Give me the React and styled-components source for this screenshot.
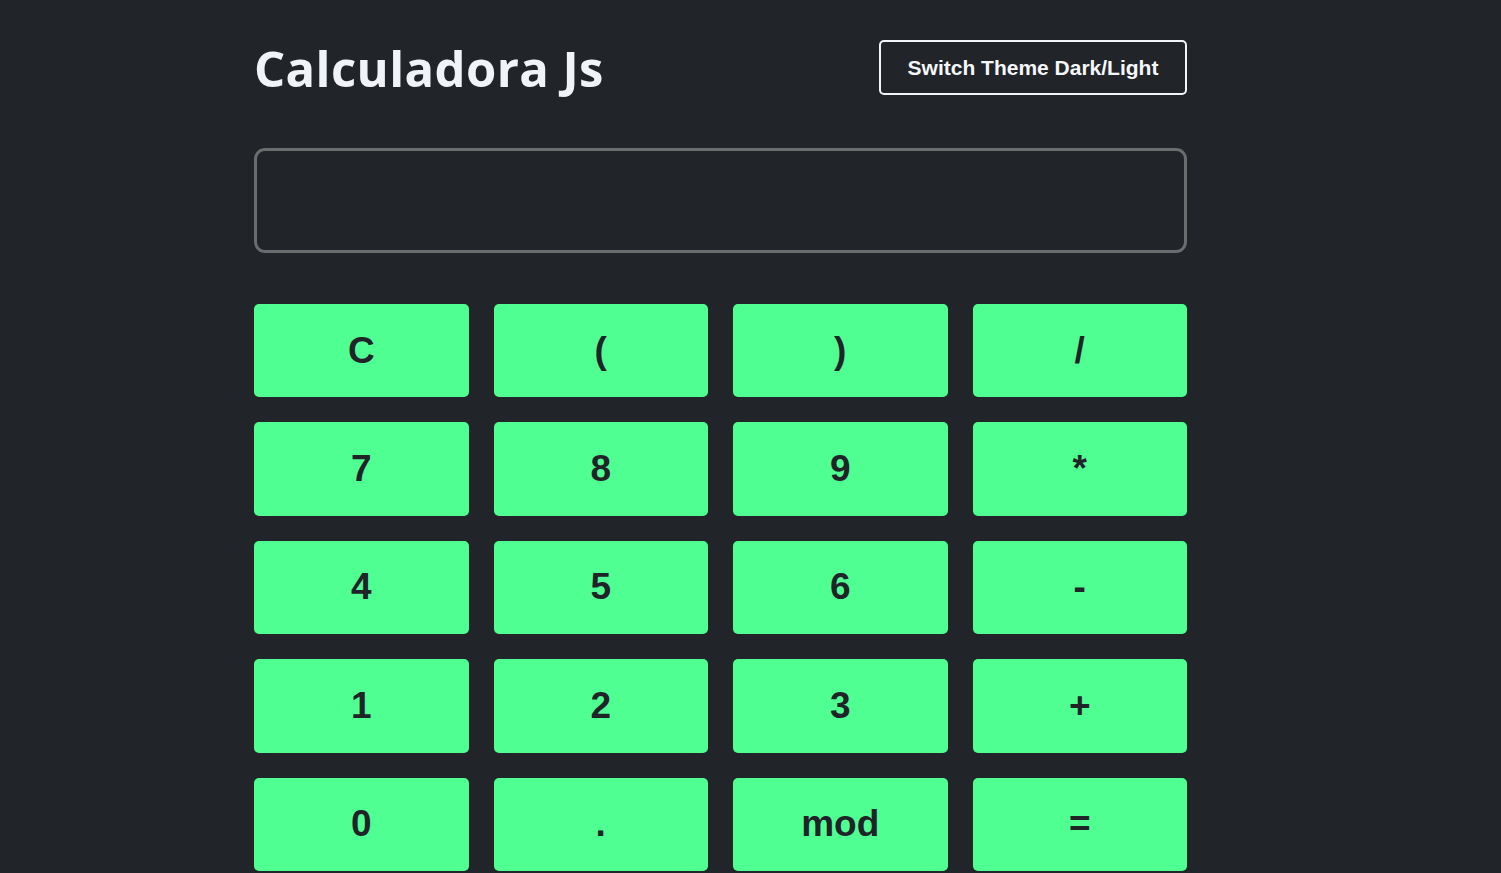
import React from "react";
import styled, { createGlobalStyle } from "styled-components";

const Global = createGlobalStyle`
  html, body { margin: 0; padding: 0; background: #212429; overflow: hidden; }
  body { font-family: "Liberation Sans", Arial, sans-serif; }
  * { box-sizing: border-box; }
`;

const Page = styled.main`
  width: 933px;
  margin-left: 254px;
  padding-top: 40px;
`;

const Header = styled.header`
  display: flex;
  align-items: center;
  justify-content: space-between;
  height: 55px;
`;

const Title = styled.h1`
  margin: 0;
  font-family: "Open Sans", sans-serif;
  font-weight: 700;
  font-size: 49px;
  letter-spacing: 0.4px;
  color: #f1f3f8;
`;

const ThemeButton = styled.button`
  width: 308px;
  height: 55px;
  background: transparent;
  border: 2px solid #f3f4f7;
  border-radius: 5px;
  color: #f6f7fa;
  font-family: "Liberation Sans", Arial, sans-serif;
  font-weight: 700;
  font-size: 21px;
  padding: 0;
`;

const Display = styled.div`
  margin-top: 53px;
  height: 105px;
  border: 3px solid #6b6c6e;
  border-radius: 11px;
`;

const Keypad = styled.div`
  margin-top: 51px;
  display: grid;
  grid-template-columns: repeat(4, 1fr);
  grid-auto-rows: 93.4px;
  gap: 25px;
`;

const Key = styled.button`
  border: none;
  border-radius: 5px;
  background: #50ff92;
  color: #202328;
  font-family: "Liberation Sans", Arial, sans-serif;
  font-weight: 700;
  font-size: 37px;
  display: flex;
  align-items: center;
  justify-content: center;
  padding: 0;
`;

const keys = ["C", "(", ")", "/", "7", "8", "9", "*", "4", "5", "6", "-", "1", "2", "3", "+", "0", ".", "mod", "="];

export default function App() {
  return (
    <>
      <Global />
      <Page>
        <Header>
          <Title>Calculadora Js</Title>
          <ThemeButton>Switch Theme Dark/Light</ThemeButton>
        </Header>
        <Display />
        <Keypad>
          {keys.map((k) => (
            <Key key={k}>{k}</Key>
          ))}
        </Keypad>
      </Page>
    </>
  );
}
